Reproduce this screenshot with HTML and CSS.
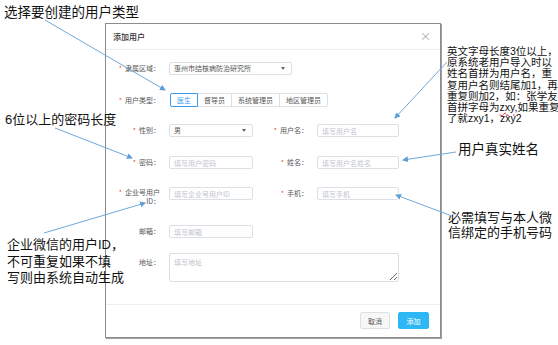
FILE: index.html
```html
<!DOCTYPE html>
<html lang="zh-CN">
<head>
    <meta charset="UTF-8">
    <meta name="viewport" content="width=device-width, initial-scale=1.0">
    <title>添加用户</title>
    <link rel="stylesheet" href="styles.css">
</head>
<body>
    <div class="canvas">
        <div class="dialog">
            <div class="dialog-header">
                <span class="dialog-title">添加用户</span>
                <span class="dialog-close">×</span>
            </div>

            <div class="dialog-body">
                <div class="form-grid">
                    <!-- 隶属区域 -->
                    <label class="field-label"><i class="req">*</i>隶属区域：</label>
                    <div class="select select-wide">惠州市结核病防治研究所<span class="caret"></span></div>

                    <!-- 用户类型 -->
                    <label class="field-label label-tall"><i class="req">*</i>用户类型：</label>
                    <div class="type-group">
                        <button class="type-btn active">医生</button>
                        <button class="type-btn">督导员</button>
                        <button class="type-btn">系统管理员</button>
                        <button class="type-btn">地区管理员</button>
                    </div>

                    <!-- 性别 / 用户名 -->
                    <label class="field-label"><i class="req">*</i>性别：</label>
                    <div class="select">男<span class="caret"></span></div>
                    <label class="field-label"><i class="req">*</i>用户名：</label>
                    <input class="field" type="text" placeholder="填写用户名">

                    <!-- 密码 / 姓名 -->
                    <label class="field-label"><i class="req">*</i>密码：</label>
                    <input class="field" type="text" placeholder="填写用户密码">
                    <label class="field-label"><i class="req">*</i>姓名：</label>
                    <input class="field" type="text" placeholder="填写用户名姓名">

                    <!-- 企业号用户ID / 手机 -->
                    <label class="field-label label-two"><i class="req">*</i>企业号用户<br>ID：</label>
                    <input class="field" type="text" placeholder="填写企业号用户ID">
                    <label class="field-label"><i class="req">*</i>手机：</label>
                    <input class="field" type="text" placeholder="填写手机">

                    <!-- 邮箱 -->
                    <label class="field-label row-start">邮箱：</label>
                    <input class="field" type="text" placeholder="填写邮箱">

                    <!-- 地址 -->
                    <label class="field-label row-start label-addr">地址：</label>
                    <textarea class="field area" placeholder="填写地址"></textarea>
                </div>
            </div>

            <div class="dialog-footer">
                <button class="btn">取消</button>
                <button class="btn btn-primary">添加</button>
            </div>
        </div>

        <!-- Annotations -->
        <div class="note note-type">选择要创建的用户类型</div>
        <div class="note note-pwd">6位以上的密码长度</div>
        <div class="note note-id">企业微信的用户ID，<br>不可重复如果不填<br>写则由系统自动生成</div>
        <div class="note note-user">英文字母长度3位以上，<br>原系统老用户导入时以<br>姓名首拼为用户名，重<br>复用户名则结尾加1，再<br>重复则加2，如：张学友<br>首拼字母为<span class="typo">zxy</span>,如果重复<br>了就zxy1，zxy2</div>
        <div class="note note-name">用户真实姓名</div>
        <div class="note note-phone">必需填写与本人微<br>信绑定的手机号码</div>

        <svg class="arrows" width="558" height="345" viewBox="0 0 558 345">
            <defs>
                <marker id="ah" markerWidth="6" markerHeight="6" refX="5" refY="3" orient="auto" markerUnits="userSpaceOnUse">
                    <path d="M0,0 L6,3 L0,6 z" fill="#5f9fd8"/>
                </marker>
            </defs>
            <line x1="45" y1="20" x2="165" y2="90" marker-end="url(#ah)"/>
            <line x1="55" y1="128" x2="132" y2="158" marker-end="url(#ah)"/>
            <line x1="44" y1="233" x2="145" y2="203" marker-end="url(#ah)"/>
            <line x1="447" y1="62" x2="395" y2="118" marker-end="url(#ah)"/>
            <line x1="456" y1="152" x2="403" y2="160" marker-end="url(#ah)"/>
            <line x1="452" y1="216" x2="396" y2="195" marker-end="url(#ah)"/>
        </svg>
    </div>
</body>
</html>
```

FILE: styles.css
```css
/* Colors */
:root {
    --border-color: #dcdfe6;
    --text-color: #606266;
    --placeholder-color: #c0c4cc;
    --blue: #3a9cf0;
    --primary: #2db7f5;
    --req: #f0502e;
}

body {
    margin: 0;
    background: #fff;
    font-family: "Noto Sans CJK SC", "Liberation Sans", sans-serif;
    color: var(--text-color);
}
.canvas {
    position: relative;
    width: 558px;
    height: 345px;
    padding: 23px 0 0 105px;
    box-sizing: border-box;
    overflow: hidden;
}

/* Dialog */
.dialog {
    width: 336px;
    height: 315px;
    box-sizing: border-box;
    border: 1px solid #8c8c8c;
    box-shadow: 1px 1px 0 #a0a0a0;
    background: #fff;
    display: flex;
    flex-direction: column;
}
.dialog-header {
    height: 26px;
    box-sizing: border-box;
    border-bottom: 1px solid #eee;
    display: flex;
    align-items: center;
    justify-content: space-between;
    padding: 0 9px 0 7px;
}
.dialog-title {
    font-size: 8px;
    font-weight: 500;
    color: #333;
}
.dialog-close {
    font-size: 11px;
    color: #aaa;
    line-height: 1;
}
.dialog-body {
    height: 254px;
    box-sizing: border-box;
    padding: 12px 0 0 2px;
}
.form-grid {
    display: grid;
    grid-template-columns: 52px 84px 46px 82px;
    grid-template-rows: 31px 31px 32px 31px 38px 28px 29px;
    column-gap: 9px;
    align-items: start;
}
.field-label {
    font-size: 7px;
    line-height: 13px;
    text-align: right;
    white-space: nowrap;
    color: #555;
}
.row-start {
    grid-column: 1;
}
.label-tall {
    line-height: 14px;
}
.label-two {
    line-height: 8.5px;
    padding-top: 1px;
}
.label-addr {
    margin-top: 3px;
}
.req {
    font-style: normal;
    color: var(--req);
    margin-right: 3px;
}

/* Inputs */
.field {
    width: 100%;
    height: 13px;
    box-sizing: border-box;
    border: 1px solid var(--border-color);
    border-radius: 2px;
    padding: 0 4px;
    margin: 0;
    font-family: inherit;
    font-size: 7px;
    color: var(--text-color);
    outline: none;
}
.field::placeholder {
    color: var(--placeholder-color);
}
.area {
    grid-column: 2 / 5;
    height: 29px;
    padding-top: 3px;
    resize: vertical;
}
.select {
    position: relative;
    height: 13px;
    box-sizing: border-box;
    border: 1px solid var(--border-color);
    border-radius: 2px;
    padding: 0 4px;
    font-size: 7px;
    line-height: 11px;
    color: #555;
}
.select-wide {
    grid-column: 2 / 5;
    width: 123px;
}
.caret {
    position: absolute;
    right: 6px;
    top: 4px;
    border-left: 2.5px solid transparent;
    border-right: 2.5px solid transparent;
    border-top: 3px solid #666;
}

/* User type buttons */
.type-group {
    grid-column: 2 / 5;
    display: flex;
    margin-left: 1px;
}
.type-btn {
    height: 14px;
    padding: 0 6px;
    margin: 0 0 0 -1px;
    border: 1px solid var(--border-color);
    background: #fff;
    font-family: inherit;
    font-size: 7px;
    line-height: 12px;
    color: #555;
}
.type-btn:first-child {
    border-radius: 2px 0 0 2px;
    margin-left: 0;
}
.type-btn:last-child {
    border-radius: 0 2px 2px 0;
}
.type-btn.active {
    position: relative;
    border-color: var(--blue);
    color: var(--blue);
}

/* Footer */
.dialog-footer {
    flex: 1;
    border-top: 1px solid #eee;
    display: flex;
    justify-content: flex-end;
    align-items: flex-start;
    gap: 8px;
    padding: 7px 11px 0 0;
}
.btn {
    height: 17px;
    width: 30px;
    padding: 0;
    border: 1px solid var(--border-color);
    border-radius: 2px;
    background: #f7f7f7;
    font-family: inherit;
    font-size: 7px;
    color: #555;
}
.btn-primary {
    width: 31px;
    background: var(--primary);
    border-color: var(--primary);
    color: #fff;
}

/* Annotations */
.note {
    position: absolute;
    color: #111;
    white-space: nowrap;
    font-family: "Liberation Sans", "Noto Sans CJK SC", sans-serif;
}
.note-type {
    left: 4px;
    top: 5px;
    font-size: 13.5px;
    line-height: 16px;
}
.note-pwd {
    left: 5px;
    top: 112px;
    font-size: 13px;
    line-height: 16px;
}
.note-id {
    left: 7px;
    top: 237px;
    font-size: 13px;
    line-height: 16.5px;
}
.note-user {
    left: 447px;
    top: 46px;
    font-size: 10.5px;
    line-height: 11.2px;
}
.typo {
    text-decoration: underline wavy #e03030;
    text-decoration-thickness: 1px;
}
.note-name {
    left: 458px;
    top: 142px;
    font-size: 13.5px;
    line-height: 16px;
}
.note-phone {
    left: 448px;
    top: 210px;
    font-size: 13px;
    line-height: 15px;
}
.arrows {
    position: absolute;
    left: 0;
    top: 0;
    pointer-events: none;
}
.arrows line {
    stroke: #6fa8dc;
    stroke-width: 1;
}
```
